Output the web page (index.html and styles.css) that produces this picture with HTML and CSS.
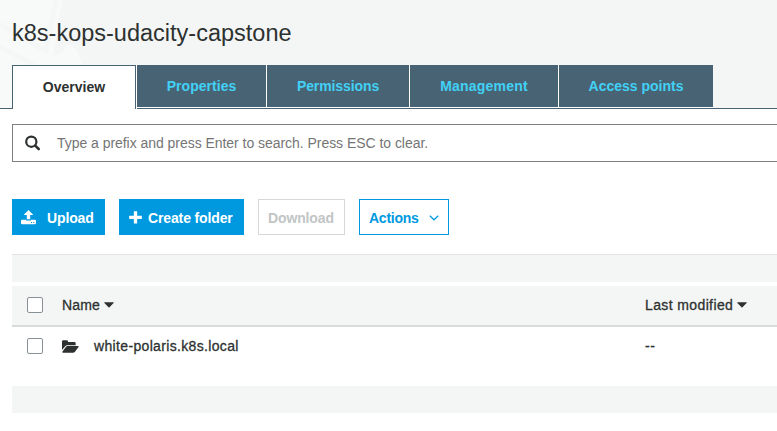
FILE: index.html
```html
<!DOCTYPE html>
<html lang="en">
<head>
<meta charset="utf-8">
<title>k8s-kops-udacity-capstone</title>
<link rel="stylesheet" href="styles.css">
</head>
<body>
<header class="header">
  <svg class="backdrop" width="90" height="108" viewBox="0 0 90 108" aria-hidden="true">
    <path d="M0 0H62L53 56Q66 53 65 45Q78 44 82 65V108H0Z" fill="#f8faf9"/>
    <path d="M0 24L46 51L56 0M0 47L34 65" fill="none" stroke="#f5f7f6" stroke-width="5"/>
  </svg>
  <h1 class="title"><span>k8s-kops-udacity-capstone</span></h1>
  <nav class="tabs">
    <a class="tab active"><span>Overview</span></a>
    <a class="tab properties"><span>Properties</span></a>
    <a class="tab permissions"><span>Permissions</span></a>
    <a class="tab management"><span>Management</span></a>
    <a class="tab access"><span>Access points</span></a>
  </nav>
</header>
<main class="main">
  <div class="search">
    <svg width="16" height="16" viewBox="0 0 16 16"><circle cx="6.3" cy="6.7" r="5.1" fill="none" stroke="#2d3130" stroke-width="2.2"/><path d="M10.2 10.6L13.7 14" stroke="#2d3130" stroke-width="2.6" stroke-linecap="round"/></svg>
    <span class="placeholder">Type a prefix and press Enter to search. Press ESC to clear.</span>
  </div>
  <div class="actions">
    <button class="btn primary upload">
      <svg width="15" height="15" viewBox="0 0 15 15" fill="#fff"><path d="M7.5 0L12.4 5H9.2V9.3H5.8V5H2.6Z"/><path fill-rule="evenodd" d="M1.2 9.7H5V10.6H10V9.7H13.8Q15 9.7 15 11V13Q15 14.2 13.8 14.2H1.2Q0 14.2 0 13V11Q0 9.7 1.2 9.7ZM10 12V13H11V12ZM12.2 12V13H13.2V12Z"/></svg>
      <span>Upload</span>
    </button>
    <button class="btn primary create">
      <svg width="13" height="13" viewBox="0 0 13 13"><path d="M6.5 .2V12.6M.2 6.4H12.8" stroke="#fff" stroke-width="3.3"/></svg>
      <span>Create folder</span>
    </button>
    <button class="btn download" disabled><span>Download</span></button>
    <button class="btn menu"><span>Actions</span>
      <svg width="10" height="6" viewBox="0 0 10 6"><path d="M.8 .8L5 4.8L9.2 .8" fill="none" stroke="#0099e0" stroke-width="1.2"/></svg>
    </button>
  </div>
  <section class="table">
    <div class="strip top"></div>
    <div class="row head">
      <i class="check"></i>
      <span class="name-head">Name</span>
      <svg class="caret" width="10" height="6" viewBox="0 0 10 6"><path d="M.4 .2H9.6Q10 .6 9.6 1L5.5 5.2Q5 5.6 4.5 5.2L.4 1Q0 .6 .4 .2Z" fill="#2d3130"/></svg>
      <div class="date"><span class="date-head">Last modified</span><svg class="caret" width="10" height="6" viewBox="0 0 10 6"><path d="M.4 .2H9.6Q10 .6 9.6 1L5.5 5.2Q5 5.6 4.5 5.2L.4 1Q0 .6 .4 .2Z" fill="#2d3130"/></svg></div>
    </div>
    <div class="row item">
      <i class="check"></i>
      <svg class="folder" width="17" height="13" viewBox="0 0 17 13" fill="#2d3130"><path d="M0 10V1.5Q0 .3 1.2 .3H4.8Q6 .3 6 1.5V2H12.2Q13.7 2 13.7 3.4V5.2H5.3Q4 5.2 3.2 6.2Z"/><path d="M5.4 6H16Q17.3 6 16.5 7L13 11.7Q12.2 12.7 11 12.7H1Q0 12.7 .5 11.6L3.8 7Q4.5 6 5.4 6Z"/></svg>
      <span class="file">white-polaris.k8s.local</span>
      <div class="date"><span class="dash">--</span></div>
    </div>
    <div class="strip bottom"></div>
  </section>
</main>
</body>
</html>
```
FILE: styles.css
```css
* { box-sizing: border-box; }
body { margin: 0; width: 777px; height: 431px; overflow: hidden; background: #fff; color: #2d3130; font: 14px/20px "Liberation Sans", Arial, sans-serif; }
svg { display: block; flex: none; }
span { white-space: nowrap; }
.header { position: relative; height: 109px; background: #f4f6f5; border-bottom: 1px solid #486474; }
.backdrop { position: absolute; left: 0; top: 0; }
.title { position: relative; margin: 0; height: 65px; padding: 19px 12px 0; font-size: 23.5px; line-height: 28px; font-weight: 400; }
.tabs { position: relative; display: flex; gap: 1px; height: 44px; margin-left: 12px; align-items: flex-start; font-weight: 700; }
.tab { display: flex; align-items: center; justify-content: center; height: 43px; background: #486474; color: #42d1f6; border-bottom: 1px solid #fff; box-shadow: 1px 0 #fff; }
.tab.active { width: 124px; height: 44px; padding-bottom: 2px; background: #fff; color: #2d3130; border: 1px solid #486474; border-bottom: 0; }
.properties { width: 129px; letter-spacing: .04px; }
.permissions { width: 142px; letter-spacing: -.1px; }
.management { width: 148px; letter-spacing: .2px; }
.access { width: 154px; box-shadow: none; }
.main { padding: 15px 0 0 12px; }
.search { display: flex; align-items: center; height: 38px; padding-left: 12px; border: 1px solid #808080; border-right: 0; }
.placeholder { margin-left: 16px; color: #757575; letter-spacing: -.04px; }
.actions { display: flex; gap: 14px; margin-top: 37px; }
.btn { display: flex; align-items: center; height: 36px; padding: 2px 0 0 9px; font: 700 14px/20px "Liberation Sans", Arial, sans-serif; letter-spacing: -.13px; background: #fff; border: 1px solid #0099e0; border-radius: 0; }
.primary { background: #0099e0; color: #fff; }
.upload { width: 93px; padding-left: 8px; gap: 11px; }
.upload svg { margin-bottom: 1px; }
.create { width: 125px; gap: 6px; }
.create svg { margin-bottom: 1px; }
.download { width: 87px; border-color: #d5d8d8; color: #c1c5c5; }
.menu { width: 90px; color: #0099e0; gap: 10px; letter-spacing: -.25px; }
.table { margin-top: 19px; }
.strip { height: 28px; background: #f4f6f5; }
.top { border-top: 1px solid #e3e5e5; }
.row { display: flex; align-items: center; position: relative; padding-left: 15px; -webkit-text-stroke: .3px currentColor; }
.head { height: 41px; padding-bottom: 1px; margin-top: 4px; background: #f4f6f5; border-bottom: 2px solid #d9dbdb; }
.item { height: 59px; padding-bottom: 21px; }
.check { width: 16px; height: 16px; margin-right: 19px; border: 1px solid #879196; border-radius: 2px; background: #fff; flex: none; }
.name-head { letter-spacing: .15px; }
.date-head { letter-spacing: .38px; }
.caret { margin-left: 4px; }
.date { display: flex; align-items: center; width: 132px; margin-left: auto; }
.file { margin-left: 15px; letter-spacing: .34px; }
.dash { letter-spacing: .6px; }
.bottom { height: 27px; }
```
